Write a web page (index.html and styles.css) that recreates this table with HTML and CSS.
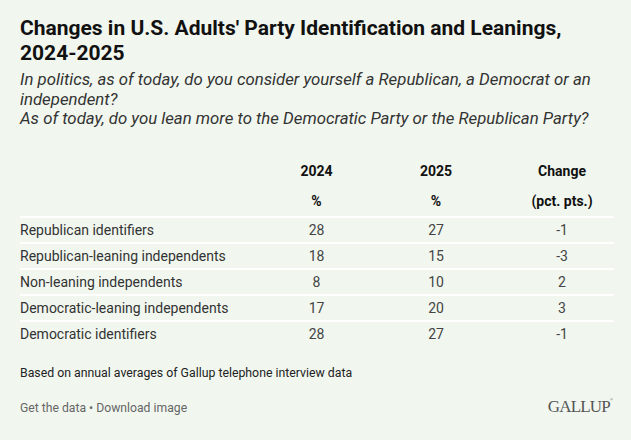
FILE: index.html
```html
<!DOCTYPE html>
<html lang="en">
<head>
<meta charset="utf-8">
<title>Changes in U.S. Adults' Party Identification and Leanings, 2024-2025</title>
<link rel="stylesheet" href="styles.css">
</head>
<body>
<div class="chart">
  <h1 class="title">Changes in U.S. Adults' Party Identification and Leanings, 2024-2025</h1>
  <p class="subtitle">In politics, as of today, do you consider yourself a Republican, a Democrat or an independent?<br>As of today, do you lean more to the Democratic Party or the Republican Party?</p>
  <table class="data">
    <colgroup>
      <col class="c-label"><col class="c-num"><col class="c-num2"><col class="c-chg">
    </colgroup>
    <thead>
      <tr><th></th><th>2024</th><th>2025</th><th class="chg">Change</th></tr>
      <tr class="units"><th></th><th>%</th><th>%</th><th class="chg">(pct. pts.)</th></tr>
    </thead>
    <tbody>
      <tr><td>Republican identifiers</td><td>28</td><td>27</td><td class="chg">-1</td></tr>
      <tr><td>Republican-leaning independents</td><td>18</td><td>15</td><td class="chg">-3</td></tr>
      <tr><td>Non-leaning independents</td><td>8</td><td>10</td><td class="chg">2</td></tr>
      <tr><td>Democratic-leaning independents</td><td>17</td><td>20</td><td class="chg">3</td></tr>
      <tr><td>Democratic identifiers</td><td>28</td><td>27</td><td class="chg">-1</td></tr>
    </tbody>
  </table>
  <p class="note">Based on annual averages of Gallup telephone interview data</p>
  <div class="footer">
    <div class="links">Get the data &bull; Download image</div>
    <div class="logo">GALLUP<span class="reg">®</span></div>
  </div>
</div>
</body>
</html>
```

FILE: styles.css
```css
html, body {
  margin: 0;
  padding: 0;
  background: #f1f7ef;
}

.chart {
  padding: 16px 20px 0 20px;
  font-family: Roboto, "Liberation Sans", sans-serif;
  color: #333;
}

.title {
  margin: 0;
  font-size: 21px;
  line-height: 25px;
  font-weight: 700;
  color: #111;
}

.subtitle {
  margin: 4px 0 0 0;
  font-size: 16.8px;
  line-height: 19.5px;
  font-style: italic;
  color: #333;
}

.data {
  margin-top: 27px;
  width: 594px;
  border-collapse: collapse;
  table-layout: fixed;
  font-size: 14px;
}

.c-label { width: 237px; }
.c-num { width: 119px; }
.c-num2 { width: 120px; }
.c-chg { width: 118px; }

.data th {
  height: 30px;
  padding: 0;
  line-height: 30px;
  font-weight: 700;
  color: #111;
  text-align: center;
}

.data .units th {
  border-bottom: 2px solid #fff;
}

.data td {
  height: 24px;
  padding: 0;
  line-height: 24px;
  text-align: center;
  color: #444;
}

.data td:first-child {
  text-align: left;
  color: #333;
}

.data tbody tr {
  border-bottom: 2px solid #fff;
}

.data tbody tr:last-child {
  border-bottom: none;
}

.data .chg {
  padding-left: 14px;
}

.note {
  margin: 19px 0 0 0;
  font-size: 12.3px;
  line-height: 16px;
  color: #222;
}

.footer {
  margin-top: 16px;
  display: flex;
  justify-content: space-between;
  align-items: baseline;
}

.links {
  font-size: 12.2px;
  line-height: 16px;
  color: #666;
}

.logo {
  font-family: "Liberation Serif", "Times New Roman", serif;
  font-size: 17px;
  letter-spacing: -0.8px;
  color: #555;
  margin-right: -2px;
}

.reg {
  font-size: 4px;
  vertical-align: top;
  letter-spacing: 0;
}
```
